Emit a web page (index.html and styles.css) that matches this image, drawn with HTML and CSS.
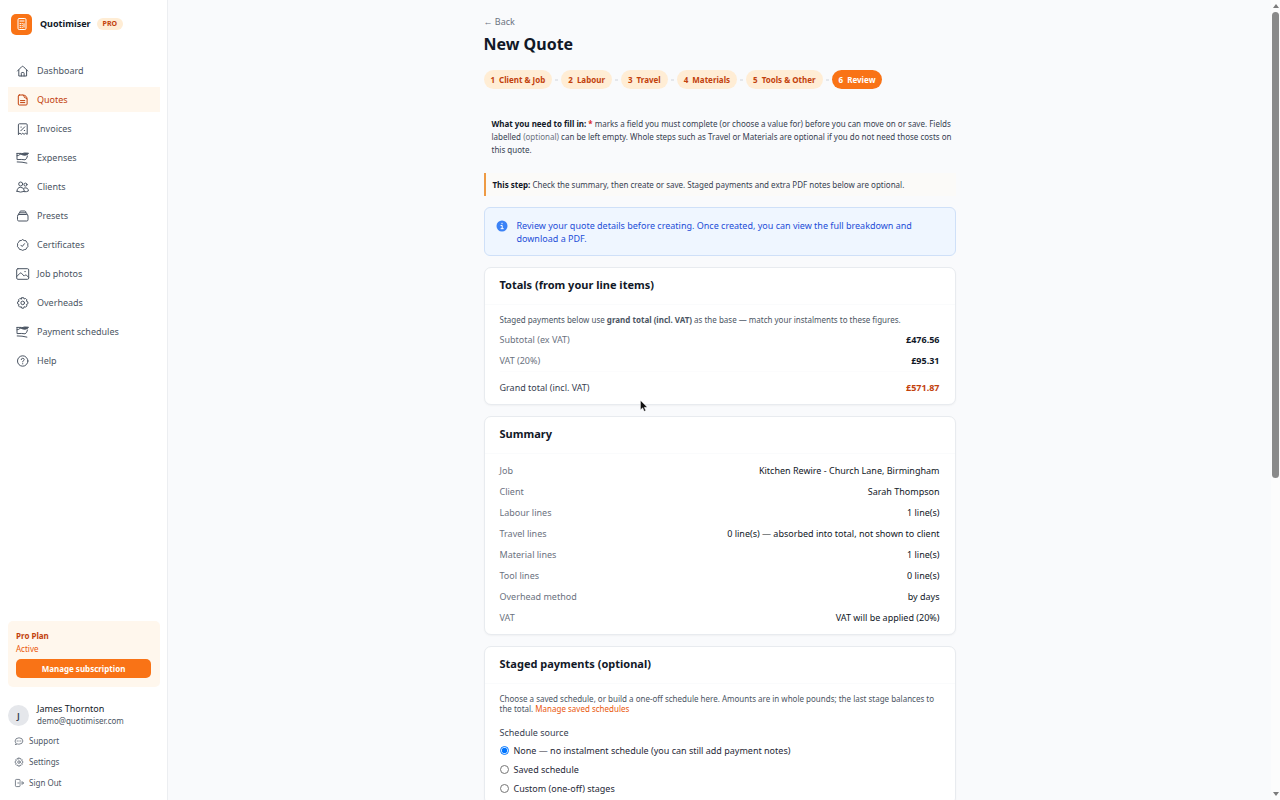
FILE: index.html
```html
<!DOCTYPE html>
<html lang="en">
<head>
  <meta charset="UTF-8">
  <meta name="viewport" content="width=device-width, initial-scale=1.0">
  <title>New Quote - Quotimiser</title>
  <link rel="stylesheet" href="styles.css">
</head>
<body>
  <div class="app">
    <aside class="sidebar">
      <div class="brand">
        <span class="logo">
          <svg viewBox="0 0 14 14"><rect x="3" y="1.5" width="8" height="11" rx="1.2"/><path d="M5 4h4M5 6.6h.6M7 6.6h.4M9 6.6v3.6M5 8.6h.6M7 8.6h.4M5 10.4h.6M7 10.4h.4"/></svg>
        </span>
        <span class="brand-name">Quotimiser</span>
        <span class="badge">PRO</span>
      </div>
      <nav class="nav">
        <a href="#" class="nav-item">
          <svg viewBox="0 0 14 14"><path d="M1.5 7 5.7 2.7q.9-.9 1.8 0L11.7 7M2.8 6v6h7.8V6M5.3 12V9.300q0-.8.8-.8h1.200q.8 0 .8.8V12"/></svg>
          <span>Dashboard</span>
        </a>
        <a href="#" class="nav-item active">
          <svg viewBox="0 0 14 14"><path d="M3.300 2h3.500q4.300.3 4.300 4.500v4.500q0 1-1 1H3.300q-1 0-1-1V3q0-1 1-1zM7 2q1.200.3 1.200 1.800 0 1 1 1 1.700 0 1.900 1.300M4.500 7.600h4.300M4.500 9.600h4.300"/></svg>
          <span>Quotes</span>
        </a>
        <a href="#" class="nav-item">
          <svg viewBox="0 0 14 14"><path d="M2.400 12.300V2.800q0-1 1-1h6.800q1 0 1 1v9.500l-1.800-1-1.300 1-1.400-1-1.400 1-1.200-1zM4.800 8.800l4-4M4.900 5.100h.4M8.300 8.500h.4"/></svg>
          <span>Invoices</span>
        </a>
        <a href="#" class="nav-item">
          <svg viewBox="0 0 14 14"><path d="M1 2.400v6.200q4.500-.4 8 .2 1.800-.4 2.500-3.800M1 2.400h4M1 4.800q2 0 3.600-1.800M1.200 10.900q4.800-.1 9.700 1.200"/><path class="solid" d="M4.800 3q3.500-1.700 7.700-.8-.6 1.800-3.500 2-2.500.1-4.200-1.200z"/></svg>
          <span>Expenses</span>
        </a>
        <a href="#" class="nav-item">
          <svg viewBox="0 0 14 14"><circle cx="4.700" cy="4" r="2"/><circle cx="9.500" cy="4.600" r="1.500"/><path d="M1 11.300q0-4 3.700-4 3.500 0 3.700 4-3.700 1.700-7.400 0zM8.400 8q3.800-1 4 3-1.800 1-4 .7"/></svg>
          <span>Clients</span>
        </a>
        <a href="#" class="nav-item">
          <svg viewBox="0 0 14 14"><path d="M1.500 7q0-1.500 1.500-1.500h7.500Q12 5.500 12 7v3.800q0 1.200-1.200 1.200H2.700q-1.200 0-1.200-1.200zM2.300 5.600q.2-1.800 1.500-1.800h6q1.200 0 1.400 1.800M3.600 3.800q0-1.800 1.200-1.800h4q1.200 0 1.200 1.800"/></svg>
          <span>Presets</span>
        </a>
        <a href="#" class="nav-item">
          <svg viewBox="0 0 14 14"><path d="M6.700 1.700 8.200 2.500l1.700.2.800 1.500 1.100 1.200v1.700l.1 1.600-1.200 1.200-.8 1.500-1.700.3-1.500.7-1.500-.7-1.700-.3-.8-1.500-1.200-1.200.1-1.600V5.400l1.100-1.200.8-1.500 1.700-.2zM4.900 7.200l1.300 1.300 2.300-2.800"/></svg>
          <span>Certificates</span>
        </a>
        <a href="#" class="nav-item">
          <svg viewBox="0 0 14 14"><rect x=".7" y="1.700" width="12" height="10.600" rx="1.200"/><path d="M.8 9.500 4 6.200q.7-.6 1.400 0l2.800 2.900.9-.9q.7-.6 1.400 0l2 2M8.800 4.600h.5"/></svg>
          <span>Job photos</span>
        </a>
        <a href="#" class="nav-item">
          <svg viewBox="0 0 14 14"><path d="M5.800 1.700h1.900l.4 1.300 1.500-.5 1.300 1.300-.5 1.400 1.500.7v1.900l-1.500.7.5 1.400-1.300 1.300-1.500-.5-.4 1.500H5.800l-.5-1.500-1.500.5-1.300-1.300.6-1.400-1.500-.7V5.900l1.500-.7-.6-1.400 1.300-1.300 1.500.5z"/><circle cx="6.700" cy="6.900" r="1.800"/></svg>
          <span>Overheads</span>
        </a>
        <a href="#" class="nav-item">
          <svg viewBox="0 0 14 14"><path d="M1 2.400v6.200q4.500-.4 8 .2 1.800-.4 2.500-3.800M1 2.400h4M1 4.800q2 0 3.600-1.800M1.200 10.900q4.800-.1 9.700 1.200"/><path class="solid" d="M4.800 3q3.500-1.700 7.700-.8-.6 1.800-3.500 2-2.500.1-4.200-1.200z"/></svg>
          <span>Payment schedules</span>
        </a>
        <a href="#" class="nav-item">
          <svg viewBox="0 0 14 14"><circle cx="6.700" cy="7" r="5.200"/><path d="M5.200 5.600Q5.300 4.300 6.700 4.300t1.500 1.200q0 .9-.9 1.300-.6.300-.6 1.100M6.700 9.600v.3"/></svg>
          <span>Help</span>
        </a>
      </nav>
      <div class="plan">
        <strong>Pro Plan</strong>
        <span>Active</span>
        <button type="button" class="plan-btn">Manage subscription</button>
      </div>
      <div class="user">
        <span class="avatar">J</span>
        <div class="user-info">
          <span class="user-name">James Thornton</span>
          <span class="user-mail">demo@quotimiser.com</span>
        </div>
      </div>
      <div class="links">
        <a href="#">
          <svg viewBox="0 0 14 14"><path d="M2.500 11.800q.7-.7.500-1.800Q1.500 8.700 1.500 7q.3-4.300 5.500-4.500 5.200.2 5.500 4.500-.3 4.300-5.500 4.500-1 0-2-.4-1 .8-2.500.7zM4.300 7h.6M6.700 7h.6M9.100 7h.6"/></svg>
          <span>Support</span>
        </a>
        <a href="#">
          <svg viewBox="0 0 14 14"><path d="M6 1.500h2l.4 1.400 1.500-.5 1.500 1.500-.6 1.500 1.500.7v2l-1.500.7.600 1.500-1.500 1.500-1.500-.5-.4 1.500H6l-.5-1.500-1.500.5-1.500-1.500.6-1.500-1.500-.7v-2l1.500-.7-.6-1.500L4 2.400l1.500.5z"/><circle cx="7" cy="7.100" r="1.800"/></svg>
          <span>Settings</span>
        </a>
        <a href="#">
          <svg viewBox="0 0 14 14"><path d="M8.500 4.800V3.300q0-1.300-1.300-1.300H3.300Q2 2 2 3.300v7.400Q2 12 3.300 12h3.900q1.300 0 1.300-1.300V9.200M5.300 7h8M11.200 4.800 13.300 7l-2.100 2.200"/></svg>
          <span>Sign Out</span>
        </a>
      </div>
    </aside>

    <main class="main">
      <div class="page">
        <a href="#" class="back">← Back</a>
        <h1>New Quote</h1>
        <ol class="steps">
          <li><button type="button" class="step"><span>1</span>Client &amp; Job</button></li>
          <li><button type="button" class="step"><span>2</span>Labour</button></li>
          <li><button type="button" class="step"><span>3</span>Travel</button></li>
          <li><button type="button" class="step"><span>4</span>Materials</button></li>
          <li><button type="button" class="step"><span>5</span>Tools &amp; Other</button></li>
          <li><button type="button" class="step current"><span>6</span>Review</button></li>
        </ol>
        <p class="guide"><strong>What you need to fill in:</strong> <b class="req">*</b> marks a field you must complete (or choose a value for) before you can move on or save. Fields labelled <span class="muted">(optional)</span> can be left empty. Whole steps such as Travel or Materials are optional if you do not need those costs on this quote.</p>
        <p class="step-note"><strong>This step:</strong> Check the summary, then create or save. Staged payments and extra PDF notes below are optional.</p>
        <div class="info">
          <svg viewBox="0 0 12 12"><circle cx="6" cy="6" r="5.500"/><path d="M5 5.500h1.200v3M5 8.700h2.300M6 3.200v.6"/></svg>
          <p>Review your quote details before creating. Once created, you can view the full breakdown and download a PDF.</p>
        </div>

        <section class="card">
          <h2>Totals (from your line items)</h2>
          <div class="card-body">
            <p class="hint">Staged payments below use <strong>grand total (incl. VAT)</strong> as the base — match your instalments to these figures.</p>
            <dl class="rows totals">
              <div><dt>Subtotal (ex VAT)</dt><dd>£476.56</dd></div>
              <div><dt>VAT (20%)</dt><dd>£95.31</dd></div>
              <div class="grand"><dt>Grand total (incl. VAT)</dt><dd>£571.87</dd></div>
            </dl>
          </div>
        </section>

        <section class="card">
          <h2>Summary</h2>
          <div class="card-body">
            <dl class="rows">
              <div><dt>Job</dt><dd>Kitchen Rewire - Church Lane, Birmingham</dd></div>
              <div><dt>Client</dt><dd>Sarah Thompson</dd></div>
              <div><dt>Labour lines</dt><dd>1 line(s)</dd></div>
              <div><dt>Travel lines</dt><dd>0 line(s) — absorbed into total, not shown to client</dd></div>
              <div><dt>Material lines</dt><dd>1 line(s)</dd></div>
              <div><dt>Tool lines</dt><dd>0 line(s)</dd></div>
              <div><dt>Overhead method</dt><dd>by days</dd></div>
              <div><dt>VAT</dt><dd>VAT will be applied (20%)</dd></div>
            </dl>
          </div>
        </section>

        <section class="card">
          <h2>Staged payments (optional)</h2>
          <div class="card-body">
            <p class="hint tight">Choose a saved schedule, or build a one-off schedule here. Amounts are in whole pounds; the last stage balances to the total. <a href="#">Manage saved schedules</a></p>
            <fieldset class="source">
              <legend>Schedule source</legend>
              <label><input type="radio" name="source" checked> None — no instalment schedule (you can still add payment notes)</label>
              <label><input type="radio" name="source"> Saved schedule</label>
              <label><input type="radio" name="source"> Custom (one-off) stages</label>
            </fieldset>
          </div>
        </section>
      </div>
    </main>

    <div class="scrollbar">
      <svg viewBox="0 0 6 4"><path d="M0 4 3 0l3 4z"/></svg>
      <div class="track"><div class="thumb"></div></div>
      <svg viewBox="0 0 6 4"><path d="M0 0h6L3 4z"/></svg>
    </div>
  </div>

  <svg class="cursor" viewBox="0 0 8 12"><path d="M.5.5v9.300l2.200-2 1.500 3.500 1.500-.7-1.500-3.300h3z"/></svg>
</body>
</html>
```
FILE: styles.css
```css
* {
  box-sizing: border-box;
  margin: 0;
  padding: 0;
}
body {
  font-family: "Noto Sans", sans-serif;
  font-size: 9px;
  line-height: 14px;
  color: #111827;
  background-color: #f9fafc;
}
a {
  color: inherit;
  text-decoration: none;
}
button {
  font-family: inherit;
  border: none;
  cursor: pointer;
}
svg {
  fill: none;
  stroke: currentColor;
  stroke-linecap: round;
  stroke-linejoin: round;
  flex-shrink: 0;
}
.app {
  display: flex;
  height: 100vh;
  overflow: hidden;
}

/* sidebar */
.sidebar {
  width: 168px;
  flex-shrink: 0;
  display: flex;
  flex-direction: column;
  padding: 0 7px 7px 8px;
  background-color: #fff;
  border-right: 1px solid #eceef1;
}
.brand {
  display: flex;
  align-items: center;
  height: 48px;
  padding-left: 3px;
  margin-bottom: 10px;
}
.logo {
  width: 21px;
  height: 21px;
  display: flex;
  align-items: center;
  justify-content: center;
  border-radius: 5px;
  background-color: #f97316;
  color: #fff;
  margin-right: 8px;
}
.logo svg {
  width: 14px;
  height: 14px;
}
.brand-name {
  font-weight: 700;
}
.badge {
  padding: 0 6px;
  margin-left: 6px;
  border-radius: 8px;
  background-color: #ffedd5;
  color: #c2410c;
  font-size: 7px;
  font-weight: 700;
  line-height: 12px;
}
.nav {
  flex: 1;
  display: flex;
  flex-direction: column;
  gap: 4px;
}
.nav-item {
  display: flex;
  align-items: center;
  gap: 7px;
  height: 25px;
  padding: 0 8px;
  color: #4b5563;
}
.nav-item svg {
  width: 14px;
  height: 14px;
}
.nav-item .solid {
  fill: currentColor;
}
.nav-item.active {
  background-color: #fff7ed;
  color: #c2410c;
}
.plan {
  display: flex;
  flex-direction: column;
  padding: 8px 9px 9px 8px;
  margin-bottom: 16px;
  border-radius: 5px;
  background-color: #fff7ed;
  color: #c2410c;
  font-size: 8px;
  line-height: 13px;
}
.plan span {
  color: #ea580c;
}
.plan-btn {
  height: 19px;
  margin-top: 4px;
  border-radius: 5px;
  background-color: #f97316;
  color: #fff;
  font-size: 8px;
  font-weight: 700;
}
.user {
  display: flex;
  align-items: center;
  gap: 8px;
  margin-bottom: 3px;
}
.avatar {
  width: 21px;
  height: 21px;
  border-radius: 50%;
  background-color: #e5e7eb;
  color: #374151;
  font-weight: 600;
  line-height: 21px;
  text-align: center;
}
.user-info {
  display: flex;
  flex-direction: column;
  line-height: 12px;
}
.user-mail {
  color: #4b5563;
  font-size: 8px;
}
.links a {
  display: flex;
  align-items: center;
  gap: 5px;
  height: 21px;
  padding-left: 6px;
  color: #4b5563;
  font-size: 8px;
}
.links svg {
  width: 10px;
  height: 10px;
}

/* main column */
.main {
  flex: 1;
  overflow: hidden;
}
.page {
  max-width: 472px;
  margin: 0 auto;
  padding-top: 15px;
}
.back {
  display: block;
  color: #6b7280;
}
h1 {
  margin: 4px 0 14px;
  font-size: 16px;
  line-height: 23px;
}
.steps {
  display: flex;
  list-style: none;
  margin-bottom: 28px;
}
.steps li {
  display: flex;
  align-items: center;
}
.steps li + li::before {
  content: "";
  width: 3px;
  height: 2px;
  margin: 0 3px;
  background-color: #e5e7eb;
}
.step {
  height: 19px;
  padding: 0 7px;
  border-radius: 10px;
  background-color: #ffedd5;
  color: #c2410c;
  font-size: 8px;
  font-weight: 700;
}
.step span {
  margin-right: 4px;
}
.step.current {
  background-color: #f97316;
  color: #fff;
}
.guide {
  padding-left: 8px;
  margin-bottom: 17px;
  color: #374151;
  font-size: 8px;
  line-height: 13px;
}
.guide strong,
.step-note strong {
  color: #111827;
}
.req {
  color: #dc2626;
}
.muted {
  color: #6b7280;
}
.step-note {
  padding: 5px 7px;
  margin-bottom: 11px;
  border-left: 2px solid #ee9a44;
  background-color: #fbfaf8;
  color: #374151;
  font-size: 8px;
  line-height: 13px;
}
.info {
  display: flex;
  gap: 9px;
  padding: 11px 11px 10px;
  margin-bottom: 11px;
  border: 1px solid #cfe0f8;
  border-radius: 6px;
  background-color: #eff6ff;
  color: #1d4ed8;
  line-height: 13px;
}
.info svg {
  width: 12px;
  height: 12px;
  margin-top: 1px;
  stroke: #fff;
}
.info circle {
  fill: #3b82f6;
  stroke: none;
}

/* cards */
.card {
  margin-bottom: 11px;
  border: 1px solid #e8ebef;
  border-radius: 7px;
  background-color: #fff;
  box-shadow: 0 1px 2px rgba(0, 0, 0, 0.04);
}
.card h2 {
  padding: 9px 15px 11px;
  border-bottom: 1px solid #fafbfc;
  font-size: 11px;
  line-height: 16px;
}
.card-body {
  padding: 6px 15px;
}
.hint {
  padding: 2px 0;
  color: #4b5563;
  font-size: 8px;
  line-height: 14px;
}
.hint.tight {
  padding: 4px 0 12px;
  line-height: 10px;
}
.hint a {
  color: #ea580c;
}
.rows div {
  display: flex;
  justify-content: space-between;
  align-items: center;
  height: 21px;
}
.rows dt {
  color: #6b7280;
}
.totals dd {
  font-weight: 700;
}
.rows .grand {
  height: 27px;
  padding-top: 6px;
  border-top: 1px solid #fcfcfd;
}
.grand dt {
  color: #374151;
}
.grand dd {
  color: #c2410c;
}
.source {
  border: none;
  color: #1f2937;
}
.source legend {
  margin-bottom: 1px;
  color: #374151;
}
.source label {
  display: flex;
  align-items: center;
  gap: 5px;
  height: 19px;
}
.source input {
  width: 9px;
  height: 9px;
}

/* scrollbar */
.scrollbar {
  width: 9px;
  flex-shrink: 0;
  display: flex;
  flex-direction: column;
  align-items: center;
  gap: 4px;
  padding: 4px 0;
  background-color: #fcfcfc;
}
.scrollbar svg {
  width: 6px;
  height: 4px;
  fill: #7b7b7b;
  stroke: none;
}
.track {
  flex: 1;
  width: 7px;
}
.thumb {
  height: 60%;
  border-radius: 4px;
  background-color: #8a8a8a;
}
.cursor {
  position: absolute;
  left: 640px;
  top: 400px;
  width: 8px;
  height: 12px;
  fill: #111;
  stroke: #fff;
  stroke-width: 0.4;
}
```
